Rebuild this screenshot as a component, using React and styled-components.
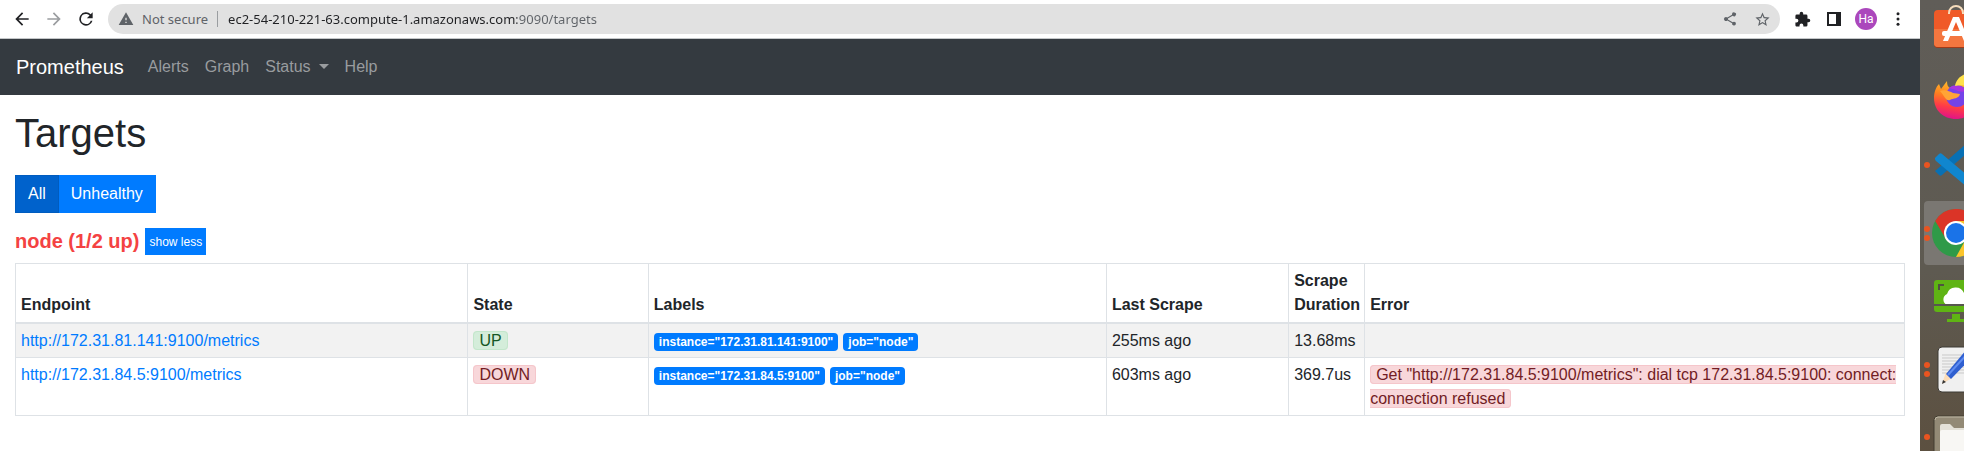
import React, { useState } from "react";
import styled, { createGlobalStyle } from "styled-components";

const GlobalStyle = createGlobalStyle`
  *, *::before, *::after { box-sizing: border-box; }
  body {
    margin: 0;
    background: #fff;
    color: #212529;
    font: 16px/24px "Liberation Sans", Arial, sans-serif;
  }
  a { color: #007bff; text-decoration: none; }
`;

const Desktop = styled.div`
  display: grid;
  grid-template-columns: minmax(0, 1fr) 44px;
  height: 100vh;
  overflow: hidden;
`;

const BrowserWindow = styled.div`
  min-width: 0;
  overflow: auto;
`;

const Toolbar = styled.header`
  display: flex;
  align-items: center;
  height: 39px;
  padding: 0 12px;
  border-bottom: 1px solid #c4c7c9;
`;

const NavButtons = styled.div`
  display: flex;
  margin-right: 12px;
`;

const ToolButton = styled.button`
  display: flex;
  align-items: center;
  justify-content: center;
  flex: none;
  width: ${(p) => p.$width || 32}px;
  height: 28px;
  padding: 0;
  border: 0;
  background: none;
  color: ${(p) => p.$color || "#202124"};
`;

const AddressBar = styled.form`
  display: flex;
  align-items: center;
  flex: 1;
  min-width: 0;
  height: 30px;
  padding: 0 2px 0 10px;
  border-radius: 15px;
  background: #e1e1e1;
`;

const SecurityLabel = styled.label`
  flex: none;
  margin-left: 8px;
  padding-right: 9px;
  border-right: 1px solid #9a9da0;
  color: #5f6368;
  font: 13px/16px "Noto Sans", sans-serif;
`;

const AddressInput = styled.input`
  flex: 1;
  min-width: 0;
  height: 24px;
  margin-left: 10px;
  padding: 0;
  border: 0;
  outline: 0;
  color: transparent;
  caret-color: #202124;
  background: linear-gradient(90deg, #202124 289px, #5f6368 289px);
  background-clip: text;
  font: 13px/24px "Noto Sans", sans-serif;
`;

const Avatar = styled.span`
  width: 22px;
  height: 22px;
  border-radius: 50%;
  background: #ab47bc;
  color: #fff;
  font: 12px/22px Roboto, sans-serif;
  text-align: center;
`;

const Navbar = styled.nav`
  display: flex;
  align-items: center;
  height: 56px;
  padding: 0 16px;
  background: #343a40;
`;

const Brand = styled.a`
  margin-right: 16px;
  color: #fff;
  font-size: 20px;
  line-height: 30px;
`;

const NavLink = styled.a`
  display: flex;
  align-items: center;
  padding: 8px;
  color: #999c9f;
`;

const Caret = styled.span`
  margin: 0 0 2px 8px;
  border: 5px solid transparent;
  border-top-color: currentColor;
  border-bottom: 0;
`;

const Content = styled.main`
  padding: 14px 15px;
`;

const Title = styled.h1`
  margin: 0 0 18px;
  font-size: 40px;
  line-height: 48px;
  font-weight: 400;
`;

const ButtonGroup = styled.div`
  display: flex;
  margin-bottom: 15px;
`;

const FilterButton = styled.button`
  position: relative;
  z-index: ${(p) => (p.$active ? 1 : 0)};
  height: 38px;
  padding: 0 12px;
  border: 1px solid ${(p) => (p.$active ? "#005cbf" : "#007bff")};
  background: ${(p) => (p.$active ? "#0062cc" : "#007bff")};
  color: #fff;
  font: inherit;
  & + & { margin-left: -1px; }
`;

const JobHeading = styled.div`
  display: flex;
  align-items: center;
  gap: 6px;
  margin-bottom: 8px;
`;

const JobName = styled.h2`
  margin: 0;
  padding-bottom: 2px;
  color: #f44242;
  font-size: 20px;
  line-height: 24px;
  font-weight: 700;
`;

const ToggleButton = styled.button`
  height: 27px;
  padding: 0 4px;
  border: 0;
  background: #007bff;
  color: #fff;
  font: 12px/18px "Liberation Sans", Arial, sans-serif;
`;

const TargetTable = styled.table`
  width: 100%;
  border-collapse: collapse;
  table-layout: fixed;
`;

const Column = styled.col`
  width: ${(p) => p.$width};
`;

const HeadCell = styled.th`
  padding: 5px 4px 5px 5px;
  border: 1px solid #dee2e6;
  border-bottom-width: 2px;
  text-align: left;
  vertical-align: bottom;
`;

const Row = styled.tr`
  &:nth-child(odd) { background: #f2f2f2; }
`;

const Cell = styled.td`
  padding: 5px 4px 4px 5px;
  border: 1px solid #dee2e6;
  vertical-align: top;
`;

const tones = {
  success: ["#155724", "#d4edda", "#c3e6cb"],
  danger: ["#721c24", "#f8d7da", "#f5c6cb"],
};

const Status = styled.span`
  padding: 0 5px;
  border: 1px solid ${(p) => tones[p.$tone][2]};
  border-radius: 4px;
  background: ${(p) => tones[p.$tone][1]};
  color: ${(p) => tones[p.$tone][0]};
`;

const LabelBadge = styled.span`
  display: inline-block;
  margin-right: 5px;
  padding: 3px 5px;
  border-radius: 4px;
  background: #007bff;
  color: #fff;
  font-size: 12px;
  line-height: 12px;
  font-weight: 700;
`;

const Dock = styled.aside`
  overflow: hidden;
  background: linear-gradient(#605d58, #5e5a51 60%, #5c5040);
`;

const DockList = styled.div`
  display: flex;
  flex-direction: column;
  gap: 4px;
  width: 72px;
  margin: -3px 0 0 4px;
`;

const DockItem = styled.button`
  display: flex;
  align-items: center;
  height: 64px;
  padding: 0;
  border: 0;
  border-radius: 4px;
  background: ${(p) => (p.$active ? "#7a7772" : "none")};
`;

const Dots = styled.span`
  display: flex;
  flex-direction: column;
  gap: 3px;
  width: 8px;
`;

const Dot = styled.span`
  width: 6px;
  height: 6px;
  border-radius: 50%;
  background: #e95420;
`;

const Icon = ({ size = 20, children }) => (
  <svg width={size} height={size} viewBox="0 0 24 24" fill="currentColor" aria-hidden="true">
    {children}
  </svg>
);

const SoftwareIcon = () => (
  <svg width="48" height="48" viewBox="0 0 48 48" aria-hidden="true">
    <rect x="2" y="6" width="44" height="37" rx="4" fill="#a33a18" />
    <rect x="2" y="5" width="44" height="37" rx="4" fill="#f05a28" />
    <path d="M2 24h44v14a4 4 0 0 1-4 4H6a4 4 0 0 1-4-4z" fill="#f4763f" />
    <path d="M17 9V8a7 7 0 0 1 14 0v1" fill="none" stroke="#f6dcbc" strokeWidth="2" />
    <path d="M21 12h6l10 24h-5l-8-19-8 19h-5z" fill="#fff" />
    <rect x="10" y="26" width="28" height="5" rx="2" fill="#fff" />
  </svg>
);

const FirefoxIcon = () => (
  <svg width="48" height="48" viewBox="0 0 48 48" aria-hidden="true">
    <defs>
      <linearGradient id="fxBody" x1="0.6" y1="0" x2="0.4" y2="1">
        <stop offset="0.1" stopColor="#ffb52b" />
        <stop offset="0.4" stopColor="#ff801f" />
        <stop offset="0.7" stopColor="#ff3b47" />
        <stop offset="1" stopColor="#e0128a" />
      </linearGradient>
    </defs>
    <path d="M24 46C11 46 2 37 2 25c0-6 2-11 5-14l2 5 6-8c0 4 1 6 3 7l6-1c8-6 15-3 20 4 3 14-5 28-20 28z" fill="url(#fxBody)" />
    <circle cx="25" cy="23" r="11" fill="#7443e8" />
    <path d="M17 15c6-5 15-2 18 3-3 1-8 1-11-1z" fill="#a936df" />
    <path d="M8 18c4-2 10 0 13 2l7 1c-1 5-7 4-10 6-4 2-6-5-10-9z" fill="#ffa436" />
    <path d="M23 13c1-6 5-10 10-12 1 7 8 7 12 17-6-4-12-7-22-5z" fill="#ffe14a" />
  </svg>
);

const CodeIcon = () => (
  <svg width="48" height="48" viewBox="0 0 48 48" aria-hidden="true">
    <path d="M3 30l4 4c1 1 2 1 3 0L35 12V2z" fill="#0870b4" />
    <path d="M3 17l4-4c1-1 2-1 3 0l25 21v12L4 20c-1-1-1-2-1-3z" fill="#1086cf" />
    <path d="M33 2l12 5v34l-12 5z" fill="#2a9fe5" />
  </svg>
);

const ChromeIcon = () => (
  <svg width="48" height="48" viewBox="0 0 48 48" aria-hidden="true">
    <circle cx="24" cy="24" r="24" fill="#2f9a48" />
    <path d="M24 12h20.800A24 24 0 0 1 24 48l10-18z" fill="#fcc52b" />
    <path d="M3.200 12A24 24 0 0 1 44.800 12H24L14 30z" fill="#db3427" />
    <circle cx="24" cy="24" r="12" fill="#fff" />
    <circle cx="24" cy="24" r="10" fill="#1a73e8" />
  </svg>
);

const CloudScreenIcon = () => (
  <svg width="48" height="48" viewBox="0 0 48 48" aria-hidden="true">
    <rect x="2" y="3" width="44" height="32" rx="3" fill="#5fb414" />
    <path d="M7 13V8h5" fill="none" stroke="#4f5340" strokeWidth="2" />
    <path d="M15 28a6 6 0 0 1 0-11 9 9 0 0 1 17-1 6 6 0 0 1 3 12z" fill="#fff" />
    <path d="M2 27h44v2H2z" fill="#57564f" />
    <path d="M20 37h8v5h5v3H15v-3h5z" fill="#5fb414" />
  </svg>
);

const EditorIcon = () => (
  <svg width="48" height="48" viewBox="0 0 48 48" aria-hidden="true">
    <rect x="6" y="2" width="40" height="45" rx="4" fill="#f0f0f0" stroke="#3d3a35" strokeWidth="1" />
    <path d="M10 10h32M10 13h32M10 16h32M10 19h32M10 22h32M10 25h32M10 28h32" stroke="#c9c9c9" />
    <path d="M10 39l4-12 6 6z" fill="#fbdcb8" />
    <path d="M14 29L34 5l7 6-22 23z" fill="#2f5fd0" />
    <path d="M16 30L36 8" stroke="#5f8cf0" strokeWidth="2" />
    <path d="M10 39l1-4 3 2z" fill="#333" />
  </svg>
);

const FilesIcon = () => (
  <svg width="48" height="48" viewBox="0 0 48 48" aria-hidden="true">
    <rect x="2" y="3" width="44" height="44" rx="4" fill="#938a76" stroke="#433d31" />
    <path d="M3 7a3 3 0 0 1 3-3h38" fill="none" stroke="#bdb6a3" />
    <path d="M8 13a2 2 0 0 1 2-2h8l4 4h24v30H8z" fill="#e4e1d8" />
    <path d="M8 19a2 2 0 0 1 2-2h36v30H8z" fill="#f8f7f4" />
  </svg>
);

const dockApps = [
  { name: "Software", icon: SoftwareIcon, windows: 0 },
  { name: "Firefox", icon: FirefoxIcon, windows: 0 },
  { name: "Code", icon: CodeIcon, windows: 1 },
  { name: "Chrome", icon: ChromeIcon, windows: 2, active: true },
  { name: "Remote desktop", icon: CloudScreenIcon, windows: 0 },
  { name: "Text editor", icon: EditorIcon, windows: 2 },
  { name: "Files", icon: FilesIcon, windows: 1 },
];

const columns = [
  ["Endpoint", "23.95%"],
  ["State", "9.55%"],
  ["Labels", "24.25%"],
  ["Last Scrape", "9.65%"],
  ["Scrape Duration", "76px"],
  ["Error", "auto"],
];

const targets = [
  {
    host: "172.31.81.141:9100",
    up: true,
    last: "255ms ago",
    duration: "13.68ms",
  },
  {
    host: "172.31.84.5:9100",
    up: false,
    last: "603ms ago",
    duration: "369.7us",
    error: 'Get "http://172.31.84.5:9100/metrics": dial tcp 172.31.84.5:9100: connect: connection refused',
  },
];

export default function App() {
  const [url, setUrl] = useState("ec2-54-210-221-63.compute-1.amazonaws.com:9090/targets");

  return (
    <>
      <GlobalStyle />
      <Desktop>
        <BrowserWindow>
          <Toolbar>
            <NavButtons>
              <ToolButton $width={20} aria-label="Back">
                <Icon><path d="M20 11H7.800l5.600-5.600L12 4l-8 8 8 8 1.400-1.400L7.800 13H20z" /></Icon>
              </ToolButton>
              <ToolButton $width={44} $color="#9b9da0" aria-label="Forward">
                <Icon><path d="M4 11h12.200l-5.600-5.600L12 4l8 8-8 8-1.400-1.400 5.600-5.600H4z" /></Icon>
              </ToolButton>
              <ToolButton $width={20} aria-label="Reload">
                <Icon><path d="M17.650 6.350A8 8 0 1 0 19.730 14h-2.080A6 6 0 1 1 12 6c1.660 0 3.140.690 4.220 1.780L13 11h7V4z" /></Icon>
              </ToolButton>
            </NavButtons>
            <AddressBar onSubmit={(e) => e.preventDefault()}>
              <ToolButton as="span" $width={16} $color="#5f6368">
                <Icon size={16}><path d="M1 21h22L12 2zM13 18h-2v-2h2zm0-4h-2v-4h2z" /></Icon>
              </ToolButton>
              <SecurityLabel htmlFor="address">Not secure</SecurityLabel>
              <AddressInput id="address" value={url} onChange={(e) => setUrl(e.target.value)} />
              <ToolButton type="button" $color="#5f6368" aria-label="Share">
                <Icon size={16}>
                  <path d="M18 16.080c-.760 0-1.440.300-1.960.770L8.910 12.700a3 3 0 0 0 0-1.400l7.050-4.110A3 3 0 1 0 15 5c0 .240.040.470.090.700L8.040 9.810a3 3 0 1 0 0 4.380l7.120 4.160a2.900 2.900 0 1 0 2.840-2.270z" />
                </Icon>
              </ToolButton>
              <ToolButton type="button" $color="#5f6368" aria-label="Bookmark">
                <Icon size={17}>
                  <path d="M22 9.240l-7.190-.620L12 2 9.190 8.630 2 9.240l5.460 4.730L5.820 21 12 17.270 18.180 21l-1.630-7.030zM12 15.400l-3.760 2.270 1-4.280-3.320-2.880 4.380-.380L12 6.100l1.710 4.040 4.380.380-3.320 2.880 1 4.280z" />
                </Icon>
              </ToolButton>
            </AddressBar>
            <ToolButton $width={44} aria-label="Extensions">
              <Icon size={17}>
                <path d="M20.500 11H19V7a2 2 0 0 0-2-2h-4V3.500a2.500 2.500 0 0 0-5 0V5H4a2 2 0 0 0-2 2v3.800h1.500a2.700 2.700 0 0 1 0 5.400H2V20c0 1.100.900 2 2 2h3.800v-1.500a2.700 2.700 0 0 1 5.400 0V22H17a2 2 0 0 0 2-2v-4h1.500a2.500 2.500 0 0 0 0-5z" />
              </Icon>
            </ToolButton>
            <ToolButton $width={20} aria-label="Side panel">
              <svg width="14" height="14" viewBox="0 0 14 14" aria-hidden="true">
                <path d="M0 0h14v14H0zM2 2v10h7V2z" fill="currentColor" fillRule="evenodd" />
              </svg>
            </ToolButton>
            <ToolButton $width={44} aria-label="Profile">
              <Avatar>Ha</Avatar>
            </ToolButton>
            <ToolButton $width={20} aria-label="Menu">
              <Icon size={18}>
                <circle cx="12" cy="5" r="2" />
                <circle cx="12" cy="12" r="2" />
                <circle cx="12" cy="19" r="2" />
              </Icon>
            </ToolButton>
          </Toolbar>

          <Navbar>
            <Brand href="#home">Prometheus</Brand>
            <NavLink href="#alerts">Alerts</NavLink>
            <NavLink href="#graph">Graph</NavLink>
            <NavLink href="#status">Status<Caret /></NavLink>
            <NavLink href="#help">Help</NavLink>
          </Navbar>

          <Content>
            <Title>Targets</Title>
            <ButtonGroup>
              <FilterButton $active>All</FilterButton>
              <FilterButton>Unhealthy</FilterButton>
            </ButtonGroup>
            <JobHeading>
              <JobName>node (1/2 up)</JobName>
              <ToggleButton>show less</ToggleButton>
            </JobHeading>
            <TargetTable>
              <colgroup>
                {columns.map(([name, width]) => <Column key={name} $width={width} />)}
              </colgroup>
              <thead>
                <tr>
                  {columns.map(([name]) => <HeadCell key={name} scope="col">{name}</HeadCell>)}
                </tr>
              </thead>
              <tbody>
                {targets.map((t) => (
                  <Row key={t.host}>
                    <Cell><a href={`http://${t.host}/metrics`}>{`http://${t.host}/metrics`}</a></Cell>
                    <Cell><Status $tone={t.up ? "success" : "danger"}>{t.up ? "UP" : "DOWN"}</Status></Cell>
                    <Cell>
                      <LabelBadge>{`instance="${t.host}"`}</LabelBadge>
                      <LabelBadge>{'job="node"'}</LabelBadge>
                    </Cell>
                    <Cell>{t.last}</Cell>
                    <Cell>{t.duration}</Cell>
                    <Cell>{t.error && <Status $tone="danger">{t.error}</Status>}</Cell>
                  </Row>
                ))}
              </tbody>
            </TargetTable>
          </Content>
        </BrowserWindow>

        <Dock>
          <DockList>
            {dockApps.map(({ name, icon: AppIcon, windows, active }) => (
              <DockItem key={name} $active={active} aria-label={name}>
                <Dots>{Array.from({ length: windows }, (_, i) => <Dot key={i} />)}</Dots>
                <AppIcon />
              </DockItem>
            ))}
          </DockList>
        </Dock>
      </Desktop>
    </>
  );
}
